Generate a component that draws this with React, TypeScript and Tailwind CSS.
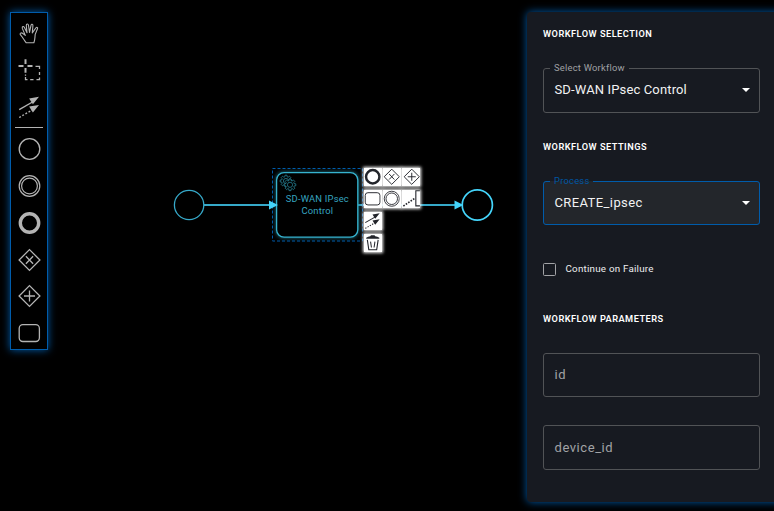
import React from "react";

type GlyphName =
  | "hand" | "lasso" | "connect" | "start" | "intermediate" | "end"
  | "exclusive" | "parallel" | "task" | "annotation" | "trash";

function Glyph({ name, size = 24 }: { name: GlyphName; size?: number }) {
  return (
    <svg width={size} height={size} viewBox="0 0 24 24" fill="none" stroke="currentColor" strokeWidth="1.3" className="block shrink-0">
      {name === "hand" && (
        <path strokeWidth="1.1" strokeLinejoin="round" d="M8.6 21.7C6.8 19.3 5.3 16.4 2.8 13.7C2.1 12.2 3.5 11.4 5 12.3L7.8 14.4L4.8 7.4C4.4 5.4 6.1 4.8 6.9 6.6L9.5 11.8L8.8 4.6C8.8 2.6 10.7 2.5 11 4.4L12 11.4L13.5 4.3C13.9 2.7 15.7 3.1 15.4 4.8L14.8 11.9L18.3 7C19.3 5.7 20.6 6.4 20 7.8L17.7 13.4C17.3 16.9 17.6 18.7 16.4 21.7Z" />
      )}
      {name === "lasso" && (
        <g>
          <path strokeWidth="2" d="M8 1.3V6M8 10V14.8M1 8H6M10 8H15" />
          <path strokeWidth="1.3" d="M18 8.3H22V11M22 14V17M22 19.5V21.6H19M16 21.6H12.7M10 21.6H8V19M8 17.8V16.5" />
        </g>
      )}
      {name === "connect" && (
        <g>
          <path strokeWidth="1.4" d="M1.7 14.6L15 7" />
          <path strokeWidth="1.4" strokeDasharray="1.9 1.7" d="M1.7 22.5L15.5 14.5" />
          <path fill="currentColor" stroke="none" d="M21.5 1.8L11.6 3.4L15.4 9.2ZM21.5 10L11.6 11.6L15.4 17.4Z" />
        </g>
      )}
      {name === "start" && <circle cx="12" cy="12" r="10.3" />}
      {name === "intermediate" && (
        <g strokeWidth="1.2"><circle cx="12" cy="12" r="10.3" /><circle cx="12" cy="12" r="7.9" /></g>
      )}
      {name === "end" && <circle cx="12" cy="12" r="9.2" strokeWidth="3.4" />}
      {name === "exclusive" && <path d="M12 1.6L22.4 12L12 22.4L1.6 12ZM8.4 8.2L15.6 15.8M15.6 8.2L8.4 15.8" />}
      {name === "parallel" && <path d="M12 1.6L22.4 12L12 22.4L1.6 12ZM12 6.5V17.5M6.5 12H17.5" />}
      {name === "task" && <rect x="1.7" y="3.7" width="20.2" height="16.8" rx="3.7" />}
      {name === "annotation" && (
        <g><path strokeWidth="1.5" d="M23.2 1H17.6V21.8H23.2" /><path strokeWidth="2.2" strokeDasharray="2.2 1.8" d="M0.5 22L16 11.5" /></g>
      )}
      {name === "trash" && (
        <g>
          <path strokeWidth="1.5" d="M4.6 8L6.6 21.6H17.4L19.4 8" />
          <path strokeWidth="1.4" d="M9 10.5L10.2 18.5M15 10.5L13.8 18.5" />
          <path fill="currentColor" stroke="none" d="M3 6.6V5.2Q5.5 3.4 8.6 3.2L9.6 1.8H14.4L15.4 3.2Q18.5 3.4 21 5.2V6.6Z" />
        </g>
      )}
    </svg>
  );
}

const tools: GlyphName[] = ["hand", "lasso", "connect"];
const shapes: GlyphName[] = ["start", "intermediate", "end", "exclusive", "parallel", "task"];
const padRows: GlyphName[][] = [
  ["end", "exclusive", "parallel"],
  ["task", "intermediate", "annotation"],
  ["connect"],
  ["trash"],
];

function Tool({ name }: { name: GlyphName }) {
  return (
    <button className="flex h-[36.8px] shrink-0 items-center justify-center">
      <span className="translate-x-[0.5px]"><Glyph name={name} /></span>
    </button>
  );
}

function Palette() {
  return (
    <aside className="mt-3 ml-[10px] flex h-[338px] w-[38px] shrink-0 flex-col border border-[#005cab] bg-black pt-[2px] text-[#b3b3b3] shadow-[0_0_8px_#005cab]">
      {tools.map((t) => <Tool key={t} name={t} />)}
      <div className="mx-1 mt-[1.5px] mb-[3px] h-px shrink-0 bg-[#b3b3b3]" />
      {shapes.map((t) => <Tool key={t} name={t} />)}
    </aside>
  );
}

// Eight-toothed cog outline centred on the origin.
function cogPath(outer: number, inner: number) {
  const points: string[] = [];
  for (let i = 0; i < 8; i++) {
    const base = (i * Math.PI) / 4;
    for (const [offset, radius] of [[-0.27, inner], [-0.17, outer], [0.17, outer], [0.27, inner]]) {
      points.push(`${(Math.cos(base + offset) * radius).toFixed(2)} ${(Math.sin(base + offset) * radius).toFixed(2)}`);
    }
  }
  return `M${points.join("L")}Z`;
}

function Gear({ x, y }: { x: number; y: number }) {
  return (
    <g transform={`translate(${x} ${y})`} fill="black">
      <path d={cogPath(5.9, 4.3)} />
      <circle r="2.6" />
    </g>
  );
}

function Canvas() {
  return (
    <main className="relative min-w-0 flex-1">
      <svg width="479" height="511" viewBox="48 0 479 511" fill="none" className="block">
        <g stroke="#36a9c9">
          <circle cx="189.1" cy="205" r="14.7" strokeWidth="1.3" />
          <path d="M204 205H270M358 205H455" strokeWidth="1.9" />
        </g>
        <rect x="276.6" y="172.6" width="81.2" height="64.6" rx="7.5" fill="black" stroke="#36b3cf" strokeWidth="1.3" className="drop-shadow-[0_0_2px_#1f7182]" />
        <rect x="272.5" y="168.5" width="90" height="72.5" stroke="#005cab" strokeDasharray="3 2" />
        <path d="M269 200.5L278 205L269 209.5ZM454.5 200.5L463.5 205L454.5 209.5Z" fill="#44d4fa" />
        <circle cx="477.3" cy="205" r="15.1" stroke="#44d4fa" strokeWidth="1.7" />
        <g stroke="#278294" strokeWidth="0.8">
          <Gear x={286} y={181} />
          <Gear x={290} y={184.8} />
        </g>
        <g fill="#36a5c1" fontFamily="Roboto, sans-serif" fontSize="9.4" textAnchor="middle" letterSpacing="0.2">
          <text x="317.4" y="202">SD-WAN IPsec</text>
          <text x="317.4" y="214">Control</text>
        </g>
      </svg>
      <div className="absolute top-[168px] left-[316px] flex flex-col gap-[4px] text-[#22242a]">
        {padRows.map((row, i) => (
          <div key={i} className="flex gap-[1.2px]">
            {row.map((name) => (
              <button key={name} className="flex size-[18px] items-center justify-center bg-white shadow-[0_0_3px_1px_#ffffff]">
                <Glyph name={name} size={17.5} />
              </button>
            ))}
          </div>
        ))}
      </div>
    </main>
  );
}

function Heading({ children }: { children: React.ReactNode }) {
  return <h2 className="h-3 text-[9.2px] leading-3 font-semibold tracking-[0.49px] whitespace-nowrap text-white">{children}</h2>;
}

function Select({ label, value, active = false }: { label: string; value: string; active?: boolean }) {
  return (
    <fieldset className={`flex min-w-0 flex-col rounded-[3px] border px-[10px] ${active ? "h-[50px] border-[#005cab] bg-[#23262b]" : "h-[51px] border-[#515356]"}`}>
      <legend className={`h-3 -ml-[4px] px-[4px] text-[9.4px] leading-3 tracking-[0.22px] ${active ? "text-[#0057a3]" : "text-[#a0a1a4]"}`}>{label}</legend>
      <div className="flex h-[31px] items-center justify-between pl-[0.5px] text-[13px] tracking-[0.14px] text-[#f2f2f3]">
        <span className={active ? "tracking-[0.4px]" : ""}>{value}</span>
        <svg width="8" height="4" viewBox="0 0 8 4" className="-mr-px"><path d="M0 0H8L4 4Z" fill="white" /></svg>
      </div>
    </fieldset>
  );
}

function Field({ label }: { label: string }) {
  return (
    <div className="flex h-[44.4px] items-center rounded-[3px] border border-[#515356] px-[10.5px] text-[13px] tracking-[0.56px] text-[#a2a3a6]">{label}</div>
  );
}

export default function App() {
  return (
    <div className="flex h-[511px] w-[774px] overflow-hidden bg-black font-['Roboto',sans-serif]">
      <Palette />
      <Canvas />
      <section className="mt-3 -mr-[10px] flex h-[490px] w-[257px] shrink-0 flex-col rounded-[4px] bg-[#171a21] pt-4 pr-[24px] pl-4 shadow-[0_0_9px_#005cab]">
        <Heading>WORKFLOW SELECTION</Heading>
        <div className="mt-[22px]"><Select label="Select Workflow" value="SD-WAN IPsec Control" /></div>
        <div className="mt-[28px]"><Heading>WORKFLOW SETTINGS</Heading></div>
        <div className="mt-[22px]"><Select label="Process" value="CREATE_ipsec" active /></div>
        <label className="mt-[37px] flex h-[14px] items-center text-[9.8px] tracking-[0.22px] text-[#ededee]">
          <span className="mr-[9.5px] size-[13px] rounded-[1.5px] border-[1.5px] border-[#a2a3a6]" />
          Continue on Failure
        </label>
        <div className="mt-[37px]"><Heading>WORKFLOW PARAMETERS</Heading></div>
        <div className="mt-[28px] flex flex-col gap-[27.8px]">
          <Field label="id" />
          <Field label="device_id" />
        </div>
      </section>
    </div>
  );
}
